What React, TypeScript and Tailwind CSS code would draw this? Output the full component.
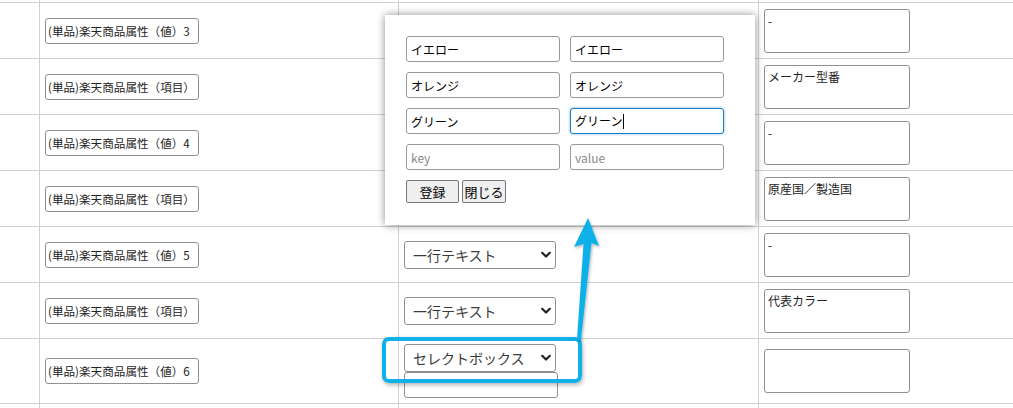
import React from "react";

const FONT = { fontFamily: '"Noto Sans CJK JP", "Noto Sans", sans-serif' };

type Row = {
  label: string;
  select?: string;
  extraInput?: boolean;
  note: string;
  h: string;
};

const rows: Row[] = [
  { label: "(単品)楽天商品属性（値）3", note: "-", h: "h-[56px]" },
  { label: "(単品)楽天商品属性（項目）", note: "メーカー型番", h: "h-[56px]" },
  { label: "(単品)楽天商品属性（値）4", note: "-", h: "h-[56px]" },
  { label: "(単品)楽天商品属性（項目）", note: "原産国／製造国", h: "h-[56px]" },
  { label: "(単品)楽天商品属性（値）5", select: "一行テキスト", note: "-", h: "h-[56px]" },
  { label: "(単品)楽天商品属性（項目）", select: "一行テキスト", note: "代表カラー", h: "h-[56px]" },
  { label: "(単品)楽天商品属性（値）6", select: "セレクトボックス", extraInput: true, note: "", h: "h-[65px]" },
];

function Chevron() {
  return (
    <svg width="10" height="7" viewBox="0 0 10 7" className="absolute right-[5px] top-1/2 -translate-y-1/2 pointer-events-none">
      <path d="M1.2 1.2 L5 5 L8.8 1.2" fill="none" stroke="#222" strokeWidth="2.2" strokeLinecap="round" strokeLinejoin="round" />
    </svg>
  );
}

function SelectBox({ value }: { value: string }) {
  return (
    <div className="relative w-[152px] h-[28px]">
      <div className="w-full h-full border border-[#8f8f8f] rounded-[3px] bg-white pl-[8px] text-[14px] leading-[26px] text-[#3a3a3a] whitespace-nowrap">
        {value}
      </div>
      <Chevron />
    </div>
  );
}

function PopInput({ value, placeholder }: { value?: string; placeholder?: string }) {
  return (
    <input
      readOnly
      value={value ?? ""}
      placeholder={placeholder}
      className="w-[154px] h-[26px] border border-[#999] rounded-[3px] bg-white px-[4px] text-[12px] text-black placeholder:text-[#8a8a8a] outline-none"
      style={FONT}
    />
  );
}

export default function App() {
  return (
    <div className="relative w-[1013px] h-[408px] overflow-hidden bg-white text-[#222]" style={FONT}>
      {/* table */}
      <div className="w-[1200px]">
        <div className="flex h-[3px] border-b border-[#d0d0d0]">
          <div className="w-[40px] border-r border-[#d0d0d0]" />
          <div className="w-[359px] border-r border-[#d0d0d0]" />
          <div className="w-[360px] border-r border-[#d0d0d0]" />
          <div className="flex-1" />
        </div>
        {rows.map((r, i) => (
          <div key={i} className={`flex ${r.h} border-b border-[#d0d0d0]`}>
            <div className="w-[40px] border-r border-[#d0d0d0]" />
            <div className="w-[359px] border-r border-[#d0d0d0] flex items-center pl-[5px]">
              <div className="w-[154px] h-[26px] border border-[#8f8f8f] rounded-[3px] bg-white pl-[2px] text-[11.6px] leading-[24px] text-[#222] whitespace-nowrap overflow-hidden">
                {r.label}
              </div>
            </div>
            <div className="w-[360px] border-r border-[#d0d0d0] flex flex-col justify-center pl-[5px]">
              {r.select && <SelectBox value={r.select} />}
              {r.extraInput && (
                <div className="w-[154px] h-[26px] border border-[#8f8f8f] rounded-[3px] bg-white" />
              )}
            </div>
            <div className="flex-1 flex items-center pl-[5px]">
              <div className="w-[146px] h-[44px] border border-[#8f8f8f] rounded-[3px] bg-white pl-[3px] pt-[3px] text-[12px] leading-[16px] text-[#222] whitespace-nowrap">
                {r.note}
              </div>
            </div>
          </div>
        ))}
        <div className="flex h-[20px]">
          <div className="w-[40px] border-r border-[#d0d0d0]" />
          <div className="w-[359px] border-r border-[#d0d0d0]" />
          <div className="w-[360px] border-r border-[#d0d0d0]" />
          <div className="flex-1" />
        </div>
      </div>

      {/* popup */}
      <div className="absolute left-[385px] top-[15px] w-[370px] h-[210px] bg-white shadow-[0_0_8px_rgba(0,0,0,0.45)] pl-[21px] pt-[21px]">
        <div className="grid grid-cols-[154px_154px] gap-x-[10px] gap-y-[10px]">
          <PopInput value="イエロー" />
          <PopInput value="イエロー" />
          <PopInput value="オレンジ" />
          <PopInput value="オレンジ" />
          <PopInput value="グリーン" />
          <div className="w-[154px] h-[26px] border border-[#1a7fc0] rounded-[3px] bg-white px-[4px] text-[12px] leading-[24px] text-black shadow-[0_0_3px_rgba(26,127,192,0.55)] flex items-center">
            <span>グリーン</span>
            <span className="inline-block w-px h-[15px] bg-black ml-[1px]" />
          </div>
          <PopInput placeholder="key" />
          <PopInput placeholder="value" />
        </div>
        <div className="flex gap-[3px] mt-[10px]">
          <button className="w-[53px] h-[23px] bg-[#efefef] border border-[#767676] rounded-[2px] text-[13px] leading-[21px] text-black">
            登録
          </button>
          <button className="w-[44px] h-[23px] bg-[#efefef] border border-[#767676] rounded-[2px] text-[13px] leading-[21px] text-black">
            閉じる
          </button>
        </div>
      </div>

      {/* annotation: highlight rectangle */}
      <div className="absolute left-[382px] top-[337px] w-[200px] h-[46px] border-4 border-[#10b0e8] rounded-[7px] shadow-[1px_2px_4px_rgba(0,0,0,0.3)]" />

      {/* annotation: arrow */}
      <svg className="absolute left-0 top-0 pointer-events-none" width="1013" height="408" viewBox="0 0 1013 408">
        <defs>
          <filter id="sh" x="-20%" y="-20%" width="140%" height="140%">
            <feDropShadow dx="1" dy="1.5" stdDeviation="1.5" floodColor="#000" floodOpacity="0.3" />
          </filter>
        </defs>
        <polygon
          points="577,340 583.5,244 574,247 588,218 599,246 591.5,243 581,340"
          fill="#10b0e8"
          filter="url(#sh)"
        />
      </svg>
    </div>
  );
}
